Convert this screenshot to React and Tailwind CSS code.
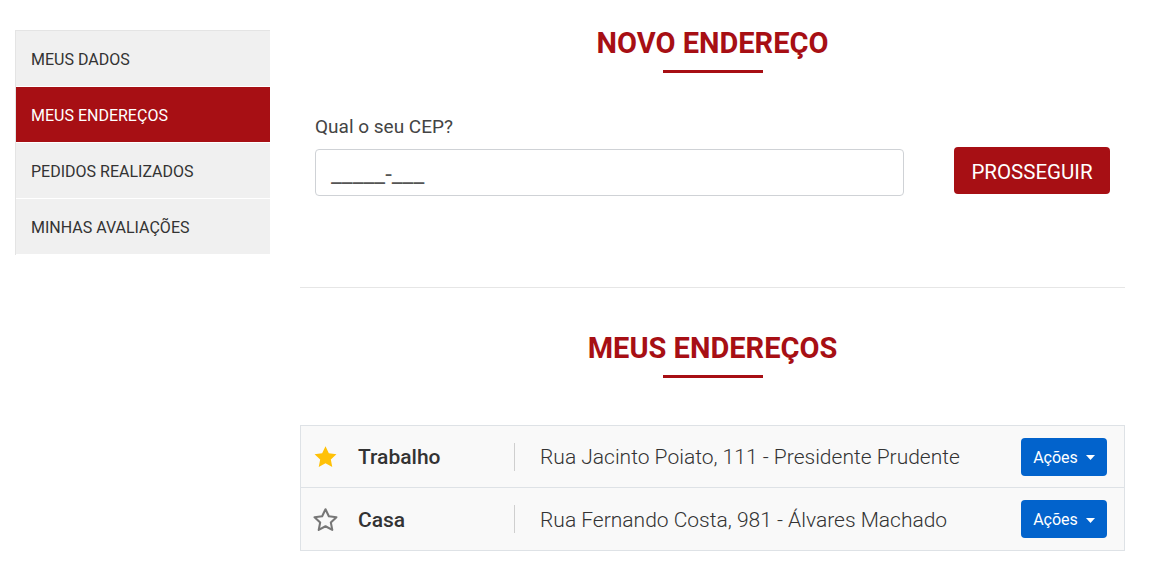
import React from "react";

const RED = "bg-[#a70f14]";

function Star({ filled }) {
  return (
    <svg width="25" height="23" viewBox="0 0 24 22" className="shrink-0">
      <path
        d="M12 1.2l3.2 6.7 7.3.9-5.4 5 1.4 7.2L12 17.5 5.5 21l1.4-7.2-5.4-5 7.3-.9z"
        fill={filled ? "#ffc107" : "none"}
        stroke={filled ? "#ffc107" : "#777"}
        strokeWidth={filled ? 0 : 2}
        strokeLinejoin="round"
      />
    </svg>
  );
}

function ActionsButton() {
  return (
    <button className="flex h-[38px] w-[86px] items-center justify-center gap-[8px] rounded-[4px] bg-[#0263cc] pt-[2px] text-[16px] text-white">
      <span>Ações</span>
      <svg width="9" height="5" viewBox="0 0 9 5">
        <path d="M0 0h9L4.5 5z" fill="#fff" />
      </svg>
    </button>
  );
}

function Row({ filled, name, address, last }) {
  return (
    <div
      className={`flex h-[62px] items-center pl-[12px] pr-[17px] ${
        last ? "" : "border-b border-[#dee2e6]"
      }`}
    >
      <Star filled={filled} />
      <div className="ml-[20px] w-[156px] pt-[3px] text-[21px] font-medium text-[#333]">
        {name}
      </div>
      <div className="h-[28px] w-px bg-[#cfcfcf]" />
      <div className="ml-[25px] flex-1 pt-[3px] text-[21px] font-light text-[#333]">
        {address}
      </div>
      <ActionsButton />
    </div>
  );
}

function SectionTitle({ children }) {
  return (
    <div className="flex flex-col items-center">
      <h2 className="text-[29px] font-bold leading-[34px] text-[#a70f14]">
        {children}
      </h2>
      <div className={`mt-[10px] h-[3px] w-[100px] ${RED}`} />
    </div>
  );
}

export default function App() {
  const menu = [
    "MEUS DADOS",
    "MEUS ENDEREÇOS",
    "PEDIDOS REALIZADOS",
    "MINHAS AVALIAÇÕES",
  ];
  return (
    <div
      className="flex min-h-[586px] w-[1161px] items-start bg-white"
      style={{ fontFamily: "Roboto, 'Noto Sans', sans-serif" }}
    >
      <nav className="ml-[15px] mt-[30px] w-[255px] border-l border-t border-[#e4e4e4]">
        {menu.map((m, i) => (
          <div
            key={m}
            className={`flex h-[56px] items-center border-b border-white pl-[15px] pt-[2px] text-[16px] ${
              i === 1 ? `${RED} text-white` : "bg-[#f0f0f0] text-[#333]"
            }`}
          >
            {m}
          </div>
        ))}
      </nav>

      <main className="ml-[30px] w-[825px] pt-[26px]">
        <SectionTitle>NOVO ENDEREÇO</SectionTitle>

        <div className="mt-[42px] flex items-end px-[15px]">
          <div className="w-[589px]">
            <label className="block text-[19px] leading-[24px] text-[#444]">
              Qual o seu CEP?
            </label>
            <div className="mt-[10px] flex h-[47px] items-center rounded-[4px] border border-[#cfd2d6] pl-[15px] pt-[2px] text-[24px] text-[#555]">
              _____-___
            </div>
          </div>
          <button
            className={`mb-[2px] ml-[50px] h-[47px] w-[156px] rounded-[4px] ${RED} pt-[3px] text-[20.5px] text-white`}
          >
            PROSSEGUIR
          </button>
        </div>

        <div className="mt-[91px] h-px bg-[#e6e6e6]" />

        <div className="mt-[43px]">
          <SectionTitle>MEUS ENDEREÇOS</SectionTitle>
        </div>

        <div className="mt-[47px] border border-[#dee2e6] bg-[#f9f9f9]">
          <Row
            filled
            name="Trabalho"
            address="Rua Jacinto Poiato, 111 - Presidente Prudente"
          />
          <Row
            name="Casa"
            address="Rua Fernando Costa, 981 - Álvares Machado"
            last
          />
        </div>
      </main>
    </div>
  );
}
